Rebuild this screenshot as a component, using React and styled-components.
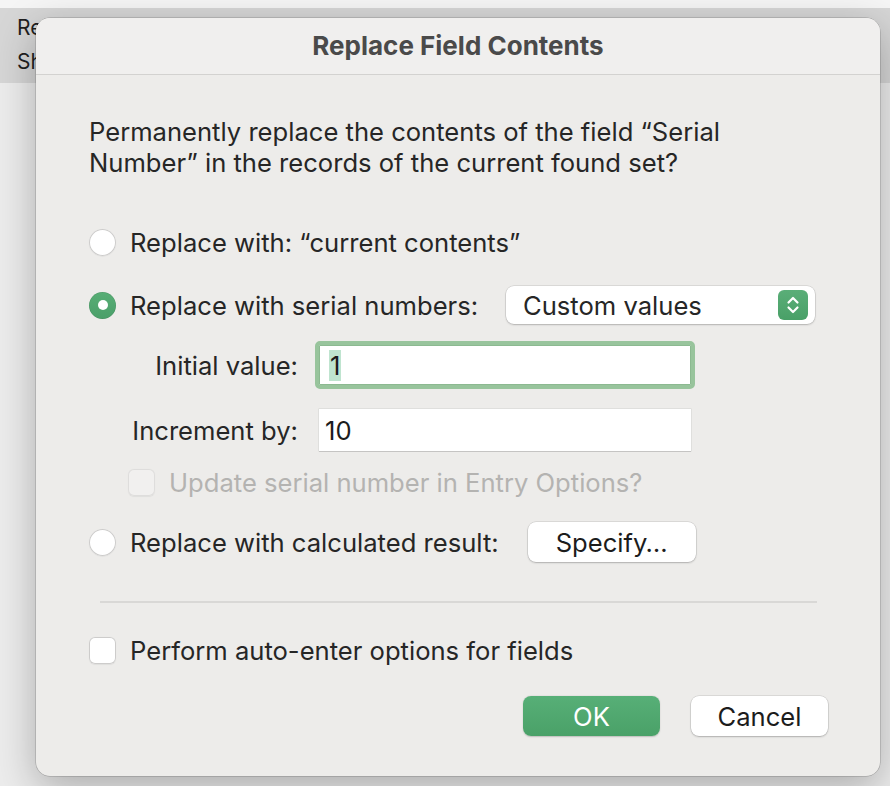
import React from 'react';
import styled, { createGlobalStyle } from 'styled-components';

const GlobalStyle = createGlobalStyle`
  html, body {
    margin: 0;
    padding: 0;
    background: #ebebeb;
  }
  * { box-sizing: border-box; }
`;

const FONT = `Inter, 'Noto Sans', 'Liberation Sans', sans-serif`;

const Desktop = styled.div`
  position: relative;
  width: 890px;
  height: 786px;
  overflow: hidden;
  font-family: ${FONT};
  background: linear-gradient(
    to bottom,
    #f5f5f5 0,
    #f5f5f5 8px,
    #d6d6d6 8px,
    #d6d6d6 83px,
    #ececec 83px,
    #ececec 100%
  );
`;

// script text of the window behind the dialog
const BackDoc = styled.div`
  padding: 11px 0 0 17px;
  font-size: 21px;
  line-height: 34px;
  color: #1f1f1f;
  white-space: nowrap;
`;

const Dialog = styled.div`
  position: absolute;
  left: 36px;
  top: 18px;
  width: 844px;
  height: 758px;
  display: flex;
  flex-direction: column;
  background: #edecea;
  border-radius: 14px;
  box-shadow: 0 0 0 0.5px rgba(0, 0, 0, 0.25), 0 12px 40px rgba(0, 0, 0, 0.28);
  overflow: hidden;
`;

const TitleBar = styled.div`
  height: 57px;
  flex: none;
  display: flex;
  align-items: center;
  justify-content: center;
  background: #f0efee;
  border-bottom: 1px solid #d3d2d0;
  font-size: 26px;
  font-weight: 700;
  color: #4a4a4a;
  padding-bottom: 2px;
`;

const Body = styled.div`
  flex: 1;
  display: flex;
  flex-direction: column;
  padding: 41px 52px 0 53px;
  color: #262626;
  font-size: 25.6px;
`;

const Prompt = styled.p`
  margin: 0;
  line-height: 31px;
  width: 660px;
`;

const OptionRow = styled.div`
  display: flex;
  align-items: center;
  height: ${p => p.$h || 40}px;
  margin-top: ${p => p.$top || 0}px;
  padding-left: ${p => p.$indent || 0}px;
  color: ${p => (p.$disabled ? '#b4b3b1' : '#262626')};
`;

const Radio = styled.span`
  flex: none;
  width: 27px;
  height: 27px;
  border-radius: 50%;
  margin-right: 14px;
  display: flex;
  align-items: center;
  justify-content: center;
  background: ${p => (p.$on ? 'linear-gradient(#58ae76, #4a9f69)' : '#fff')};
  box-shadow: ${p =>
    p.$on
      ? 'inset 0 0 0 0.5px rgba(0,0,0,0.12)'
      : 'inset 0 0 0 1px #cdcccb, 0 0.5px 1px rgba(0,0,0,0.08)'};

  &::after {
    content: '';
    display: ${p => (p.$on ? 'block' : 'none')};
    width: 10px;
    height: 10px;
    border-radius: 50%;
    background: #fff;
  }
`;

const Check = styled.span`
  flex: none;
  width: 27px;
  height: 27px;
  border-radius: 6px;
  margin-right: 14px;
  background: ${p => (p.$disabled ? '#f1f0ef' : '#fff')};
  box-shadow: inset 0 0 0 1px ${p => (p.$disabled ? '#dedddc' : '#cdcccb')},
    0 0.5px 1px rgba(0, 0, 0, 0.06);
`;

const Label = styled.span`
  white-space: nowrap;
`;

const Popup = styled.div`
  margin-left: auto;
  margin-right: 13px;
  width: 309px;
  height: 38px;
  display: flex;
  align-items: center;
  justify-content: space-between;
  padding: 0 7px 0 17px;
  background: #fff;
  border-radius: 8px;
  box-shadow: 0 0 0 0.5px rgba(0, 0, 0, 0.15), 0 1px 2px rgba(0, 0, 0, 0.18);
`;

const Stepper = styled.span`
  width: 30px;
  height: 30px;
  border-radius: 6px;
  display: flex;
  align-items: center;
  justify-content: center;
  background: linear-gradient(#5aae78, #49a067);
`;

const FieldGrid = styled.div`
  display: grid;
  grid-template-columns: 209px 372px;
  column-gap: 21px;
  align-items: center;
  margin-top: ${p => p.$top || 0}px;
`;

const FieldLabel = styled.span`
  text-align: right;
  white-space: nowrap;
`;

const Field = styled.div`
  height: ${p => (p.$focus ? 48 : 42)}px;
  margin: ${p => (p.$focus ? '0 -4px' : '0')};
  display: flex;
  align-items: center;
  padding-left: ${p => (p.$focus ? 10 : 6)}px;
  background: #fff;
  border: ${p => (p.$focus ? '4px solid #98c49c' : 'none')};
  border-radius: ${p => (p.$focus ? 5 : 0)}px;
  box-shadow: ${p =>
    p.$focus
      ? 'inset 0 0 0 1px #8cb991'
      : '0 0 0 0.5px #d2d1d0, 0 1px 0 #b8b7b6'};
  color: #1c1c1c;
`;

const Selected = styled.span`
  background: #bfe4cf;
  padding: 0 1px;
`;

const PushButton = styled.button`
  font-family: ${FONT};
  font-size: 25.6px;
  width: ${p => p.$w || 137}px;
  height: 40px;
  border: none;
  border-radius: 8px;
  color: ${p => (p.$primary ? '#fff' : '#1c1c1c')};
  background: ${p => (p.$primary ? 'linear-gradient(#57af77, #4aa168)' : '#fff')};
  box-shadow: ${p =>
    p.$primary
      ? '0 0.5px 1.5px rgba(0,0,0,0.2)'
      : '0 0 0 0.5px rgba(0,0,0,0.15), 0 1px 2px rgba(0,0,0,0.2)'};
  margin-left: ${p => p.$gap || 0}px;
  padding: 0;
`;

const Divider = styled.hr`
  margin: 39px 11px 0 11px;
  border: none;
  border-top: 2px solid #d9d8d6;
`;

const ButtonBar = styled.div`
  display: flex;
  justify-content: flex-end;
  margin-top: 26px;
`;

const StepperIcon = () => (
  <svg width="14" height="20" viewBox="0 0 14 20" fill="none">
    <path d="M2.5 7.5 L7 3 L11.5 7.5" stroke="#fff" strokeWidth="2.2" strokeLinecap="round" strokeLinejoin="round" />
    <path d="M2.5 12.5 L7 17 L11.5 12.5" stroke="#fff" strokeWidth="2.2" strokeLinecap="round" strokeLinejoin="round" />
  </svg>
);

export default function App() {
  return (
    <Desktop>
      <GlobalStyle />
      <BackDoc>
        <div>Replace Field Contents</div>
        <div>Show All Records</div>
      </BackDoc>

      <Dialog>
        <TitleBar>Replace Field Contents</TitleBar>
        <Body>
          <Prompt>
            Permanently replace the contents of the field “Serial Number” in the records of the current found set?
          </Prompt>

          <OptionRow $top={44}>
            <Radio />
            <Label>Replace with: “current contents”</Label>
          </OptionRow>

          <OptionRow $top={22} $h={42}>
            <Radio $on />
            <Label>Replace with serial numbers:</Label>
            <Popup>
              <span>Custom values</span>
              <Stepper><StepperIcon /></Stepper>
            </Popup>
          </OptionRow>

          <FieldGrid $top={15}>
            <FieldLabel>Initial value:</FieldLabel>
            <Field $focus><Selected>1</Selected></Field>
          </FieldGrid>

          <FieldGrid $top={20}>
            <FieldLabel>Increment by:</FieldLabel>
            <Field>10</Field>
          </FieldGrid>

          <OptionRow $top={11} $indent={39} $disabled>
            <Check $disabled />
            <Label>Update serial number in Entry Options?</Label>
          </OptionRow>

          <OptionRow $top={20}>
            <Radio />
            <Label>Replace with calculated result:</Label>
            <PushButton $w={168} $gap={29}>Specify…</PushButton>
          </OptionRow>

          <Divider />

          <OptionRow $top={27}>
            <Check />
            <Label>Perform auto-enter options for fields</Label>
          </OptionRow>

          <ButtonBar>
            <PushButton $primary>OK</PushButton>
            <PushButton $gap={31}>Cancel</PushButton>
          </ButtonBar>
        </Body>
      </Dialog>
    </Desktop>
  );
}
